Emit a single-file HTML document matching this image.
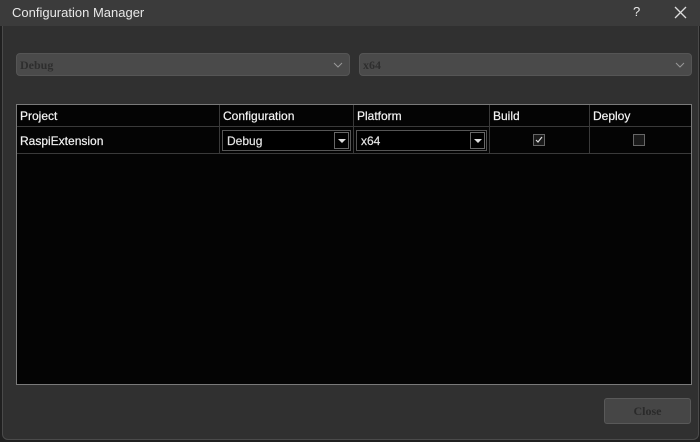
<!DOCTYPE html>
<html><head><style>
body{margin:0;width:700px;height:442px;background:#202020;font-family:"Liberation Sans",sans-serif;overflow:hidden;position:relative}
.win{position:absolute;left:2px;top:0;width:697px;height:440px;background:#303030;border:1px solid #4a4a4a;border-top:none;border-radius:0 0 6px 6px;box-sizing:border-box}
.title{position:absolute;left:0;top:0;width:700px;height:26px;background:#3b3b3b;color:#e8e8e8;font-size:13px}
.title .t{position:absolute;left:12px;top:5px}
.title .q{position:absolute;left:633px;top:4px;font-size:13px}
.combo{position:absolute;top:53px;height:23px;background:#4a4a4a;border:1px solid #555;border-radius:4px;box-sizing:border-box;color:#2e2e2e;font-weight:bold;font-size:12px;font-family:"Liberation Serif",serif}
.combo span{position:absolute;left:3px;top:4px}
.combo svg{position:absolute;right:6px;top:8px}
.tbl{position:absolute;left:16px;top:104px;width:676px;height:281px;background:#040404;border:1px solid #7a7a7a;box-sizing:border-box}
.cell{position:absolute;color:#f4f4f4;font-size:12px;box-sizing:border-box;border-right:1px solid #3a3a3a;border-bottom:1px solid #3a3a3a;-webkit-text-stroke:0.2px #f4f4f4}
.dd{position:absolute;top:3px;height:21px;border:1px solid #555;box-sizing:border-box;background:#000}
.dd span{position:absolute;left:4px;top:3px;color:#ddd}
.dd i{position:absolute;right:1px;top:1px;width:15px;height:17px;border:1px solid #666;box-sizing:border-box;background:#000}
.dd i:after{content:"";position:absolute;left:3px;top:6px;border:4px solid transparent;border-top:4px solid #ddd}
.cb{position:absolute;width:12px;height:12px;border:1px solid #666;background:#1a1a1a;box-sizing:border-box}
.btn{position:absolute;left:604px;top:398px;width:87px;height:26px;background:#464646;border:1px solid #595959;border-radius:3px;box-sizing:border-box;color:#2a2a2a;font-weight:bold;font-size:12px;text-align:center;line-height:24px;font-family:"Liberation Serif",serif}
</style></head><body>
<div class="win"></div>
<div class="title"><span class="t">Configuration Manager</span><span class="q">?</span>
<svg style="position:absolute;left:674px;top:6px" width="13" height="13"><path d="M1 1L12 12M12 1L1 12" stroke="#ddd" stroke-width="1.3"/></svg></div>
<div class="combo" style="left:16px;width:334px"><span>Debug</span><svg width="10" height="6"><path d="M1 1L5 5L9 1" stroke="#999" fill="none"/></svg></div>
<div class="combo" style="left:359px;width:333px"><span>x64</span><svg width="10" height="6"><path d="M1 1L5 5L9 1" stroke="#999" fill="none"/></svg></div>
<div class="tbl">
<div class="cell" style="left:0;top:0;width:203px;height:22px;padding:4px 3px">Project</div>
<div class="cell" style="left:203px;top:0;width:134px;height:22px;padding:4px 3px">Configuration</div>
<div class="cell" style="left:337px;top:0;width:136px;height:22px;padding:4px 3px">Platform</div>
<div class="cell" style="left:473px;top:0;width:100px;height:22px;padding:4px 3px">Build</div>
<div class="cell" style="left:573px;top:0;width:101px;height:22px;padding:4px 3px;border-right:none">Deploy</div>
<div class="cell" style="left:0;top:22px;width:203px;height:27px;padding:7px 3px">RaspiExtension</div>
<div class="cell" style="left:203px;top:22px;width:134px;height:27px"><div class="dd" style="left:2px;width:129px"><span>Debug</span><i></i></div></div>
<div class="cell" style="left:337px;top:22px;width:136px;height:27px"><div class="dd" style="left:2px;width:131px"><span>x64</span><i></i></div></div>
<div class="cell" style="left:473px;top:22px;width:100px;height:27px"><div class="cb" style="left:43px;top:7px"><svg width="10" height="10" style="position:absolute;left:0;top:0"><path d="M2 5L4 7L8 2" stroke="#ddd" fill="none" stroke-width="1.2"/></svg></div></div>
<div class="cell" style="left:573px;top:22px;width:101px;height:27px;border-right:none"><div class="cb" style="left:43px;top:7px"></div></div>
</div>
<div class="btn">Close</div>
</body></html>
